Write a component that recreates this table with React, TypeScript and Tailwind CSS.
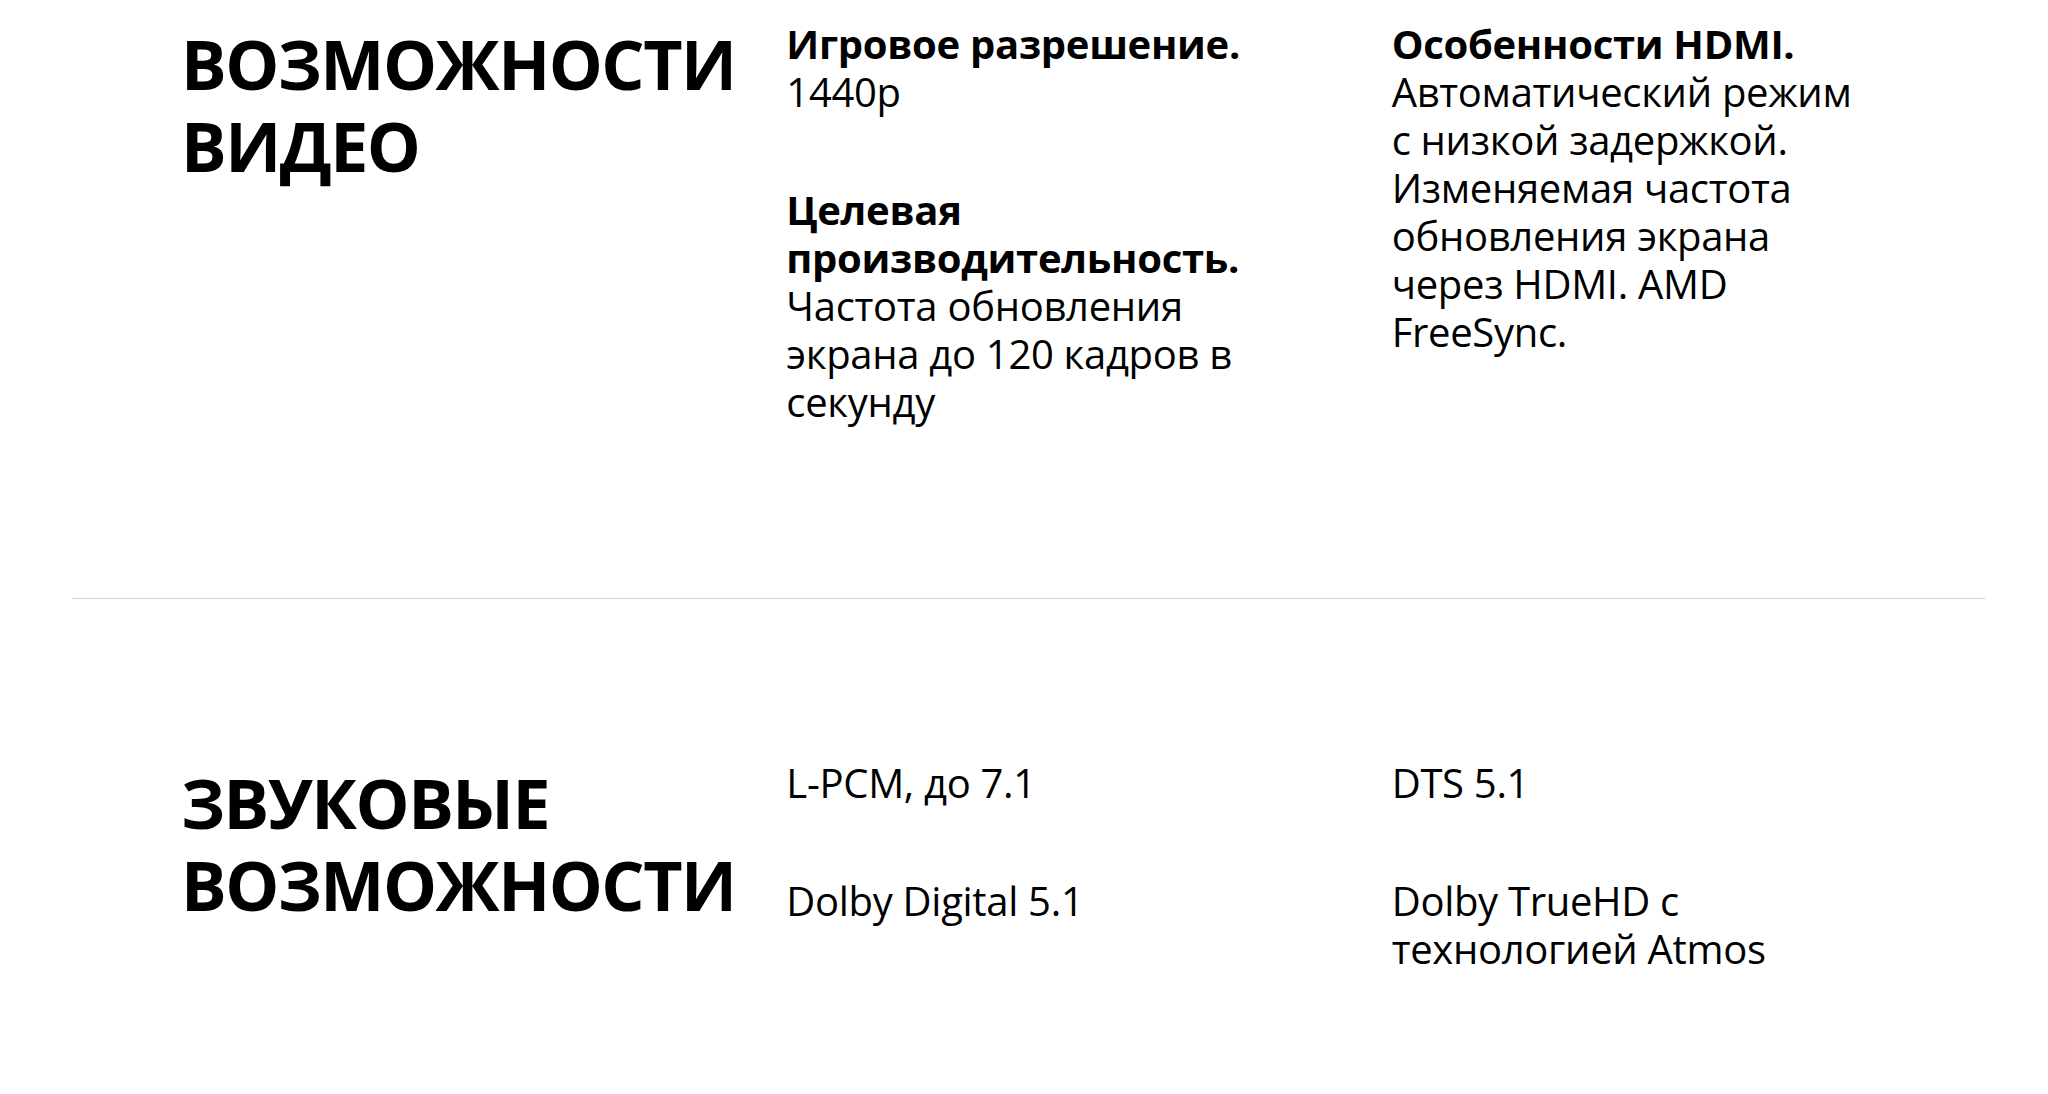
import React from "react";

type Spec = { label?: string; text: string };

const sections: { title: string[]; cols: Spec[][]; first?: boolean }[] = [
  {
    title: ["ВОЗМОЖНОСТИ", "ВИДЕО"],
    first: true,
    cols: [
      [
        { label: "Игровое разрешение.", text: "1440p" },
        {
          label: "Целевая производительность.",
          text: "Частота обновления экрана до 120 кадров в секунду",
        },
      ],
      [
        {
          label: "Особенности HDMI.",
          text: "Автоматический режим с низкой задержкой. Изменяемая частота обновления экрана через HDMI. AMD FreeSync.",
        },
      ],
    ],
  },
  {
    title: ["ЗВУКОВЫЕ", "ВОЗМОЖНОСТИ"],
    cols: [
      [{ text: "L-PCM, до 7.1" }, { text: "Dolby Digital 5.1" }],
      [{ text: "DTS 5.1" }, { text: "Dolby TrueHD с технологией Atmos" }],
    ],
  },
];

export default function App() {
  return (
    <div
      className="min-h-screen bg-white text-black"
      style={{ fontFamily: '"Open Sans", "Noto Sans", sans-serif' }}
    >
      {sections.map((s, i) => (
        <div
          key={i}
          className={
            s.first
              ? "ml-[72px] w-[1913px] border-b border-[#d2d2d2] pt-[20px] pb-[172px]"
              : "ml-[72px] w-[1913px] pt-[160px] pb-[80px]"
          }
        >
          <div className="px-[109px] grid grid-cols-3 gap-x-[121px]">
            <h2 className="pt-[3px] text-[68px] leading-[82px] font-bold tracking-[-1.5px]">
              {s.title.map((t) => (
                <span key={t} className="block">
                  {t}
                </span>
              ))}
            </h2>
            {s.cols.map((col, j) => (
              <div key={j} className="flex flex-col gap-[70px]">
                {col.map((item, k) => (
                  <p
                    key={k}
                    className="text-[40px] leading-[48px] tracking-[-0.3px]"
                  >
                    {item.label && (
                      <span className="font-bold">{item.label} </span>
                    )}
                    {item.label && <br />}
                    {item.text}
                  </p>
                ))}
              </div>
            ))}
          </div>
        </div>
      ))}
    </div>
  );
}
